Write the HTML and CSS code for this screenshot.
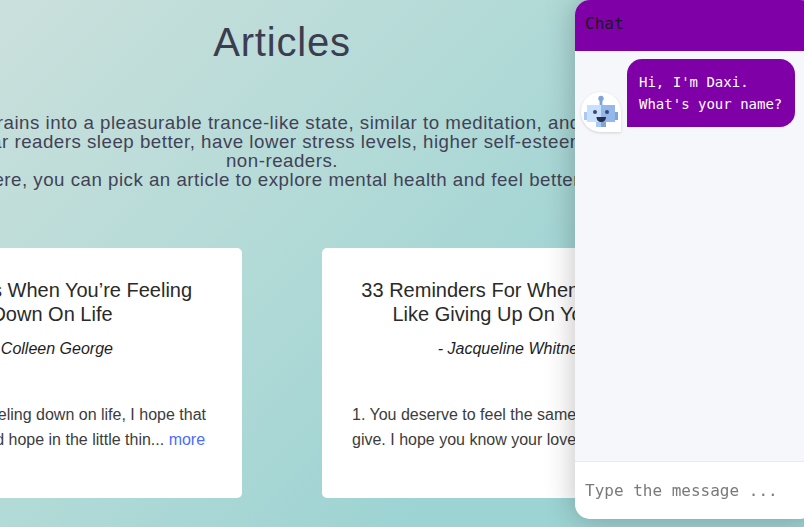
FILE: index.html
```html
<!doctype html>
<html lang="en">
<head>
<meta charset="utf-8">
<title>Articles</title>
<link rel="stylesheet" href="styles.css">
</head>
<body>
  <main class="page">
    <h1 class="page_title">Articles</h1>
    <div class="intro">
      <span>Reading takes our brains into a pleasurable trance-like state, similar to meditation, and it helps us unwind</span>
      <span>Regular readers sleep better, have lower stress levels, higher self-esteem and</span>
      <span>non-readers.</span>
      <span>Here, you can pick an article to explore mental health and feel better.</span>
    </div>
    <section class="cards">
      <article class="card">
        <h2 class="card_title">Remedies When You’re Feeling Down On Life</h2>
        <p class="card_author">- Colleen George</p>
        <p class="card_text">While you’re feeling down on life, I hope that you can yet find hope in the little thin... <a href="#">more</a></p>
      </article>
      <article class="card">
        <h2 class="card_title">33 Reminders For When You Feel Like Giving Up On Yourself</h2>
        <p class="card_author">- Jacqueline Whitney</p>
        <p class="card_text">1. You deserve to feel the same love that you give. I hope you know your love is e... <a href="#">more</a></p>
      </article>
    </section>
  </main>

  <aside class="chat">
    <header class="chat_head">Chat</header>
    <div class="chat_body">
      <div class="msg">
        <div class="msg_avatar">
          <svg viewBox="0 0 40 40" width="40" height="40">
            <rect x="18.6" y="6" width="2.8" height="7" fill="#7fa3da"/>
            <circle cx="20" cy="6.5" r="2.7" fill="#7fa3da"/>
            <rect x="3" y="20" width="3" height="8" fill="#a9c8f3"/>
            <rect x="34" y="20" width="3" height="8" fill="#7fa3da"/>
            <rect x="6" y="13" width="14" height="17" fill="#c6e0fd"/>
            <rect x="20" y="13" width="14" height="17" fill="#94b8ec"/>
            <rect x="15" y="30" width="5" height="5" fill="#a9c8f3"/>
            <rect x="20" y="30" width="5" height="5" fill="#7fa3da"/>
            <circle cx="14" cy="20" r="2" fill="#3a4a68"/>
            <circle cx="26" cy="20" r="2" fill="#3a4a68"/>
            <path d="M15.5 25h9.5c0 3-2 5-4.75 5s-4.75-2-4.75-5z" fill="#26304a"/>
          </svg>
        </div>
        <div class="msg_bubble">Hi, I'm Daxi.<br>What's your name?</div>
      </div>
    </div>
    <div class="chat_foot">
      <input class="chat_input" type="text" placeholder="Type the message ...">
    </div>
  </aside>
</body>
</html>
```

FILE: styles.css
```css
* {
  box-sizing: border-box;
  margin: 0;
  padding: 0;
}
html,
body {
  height: 100%;
}
body {
  overflow: hidden;
  font-family: "Liberation Sans", Arial, sans-serif;
  background: linear-gradient(135deg, #cbe0dc 0%, #b2dad7 40%, #9dd3d3 70%);
}
.page {
  width: 564px;
  height: 527px;
  padding-top: 19px;
}
.page_title {
  font-size: 40px;
  font-weight: 400;
  line-height: 47px;
  letter-spacing: 0.8px;
  text-align: center;
  color: #3d3d50;
}
.intro {
  display: flex;
  flex-direction: column;
  align-items: center;
  margin-top: 47px;
  font-size: 18.72px;
  line-height: 19px;
  letter-spacing: 0.5px;
  color: #424256;
}
.intro span {
  white-space: nowrap;
}
.cards {
  display: flex;
  justify-content: center;
  gap: 80px;
  margin-top: 59px;
}
.card {
  flex: 0 0 380px;
  height: 250px;
  padding: 30px;
  background: #fff;
  border-radius: 5px;
}
.card_title {
  font-size: 20px;
  font-weight: 400;
  line-height: 24px;
  text-align: center;
  color: #2a2a2a;
}
.card_author {
  margin-top: 14px;
  font-size: 16px;
  font-style: italic;
  line-height: 18px;
  text-align: center;
  color: #1e1e1e;
}
.card_text {
  margin-top: 44px;
  font-size: 16px;
  line-height: 25px;
  color: #3c3c3c;
}
.card_text a {
  color: #4a6cff;
  text-decoration: none;
}
.chat {
  position: fixed;
  top: 0;
  left: 575px;
  bottom: 8px;
  width: 240px;
  display: flex;
  flex-direction: column;
  overflow: hidden;
  border-radius: 15px;
  box-shadow: 0 0 30px rgba(0, 0, 0, 0.25);
  font-family: "DejaVu Sans Mono", monospace;
}
.chat_head {
  flex: 0 0 51px;
  padding: 14px 10px;
  font-size: 16px;
  line-height: 19px;
  color: #1a1a1a;
  background: #8000a8;
}
.chat_body {
  flex: 1;
  padding: 8px 6px;
  background: #f5f7fb;
}
.msg {
  display: flex;
  align-items: flex-end;
  gap: 6px;
  width: 214px;
}
.msg_avatar {
  flex: 0 0 40px;
  height: 40px;
  margin-bottom: -5px;
  background: #fff;
  border-radius: 50% 50% 0 50%;
  box-shadow: 0 1px 3px rgba(0, 0, 0, 0.15);
}
.msg_avatar svg {
  display: block;
}
.msg_bubble {
  flex: 0 0 168px;
  padding: 12px;
  font-size: 14px;
  line-height: 22px;
  color: #fff;
  background: #8000a8;
  border-radius: 15px 15px 15px 0;
}
.chat_foot {
  flex: 0 0 58px;
  display: flex;
  align-items: center;
  padding: 0 10px;
  background: #fff;
  border-top: 1px solid #e8eaf0;
}
.chat_input {
  width: 100%;
  border: none;
  outline: none;
  font: 16px "DejaVu Sans Mono", monospace;
  background: transparent;
}
.chat_input::placeholder {
  color: #7a7a7a;
}
```
